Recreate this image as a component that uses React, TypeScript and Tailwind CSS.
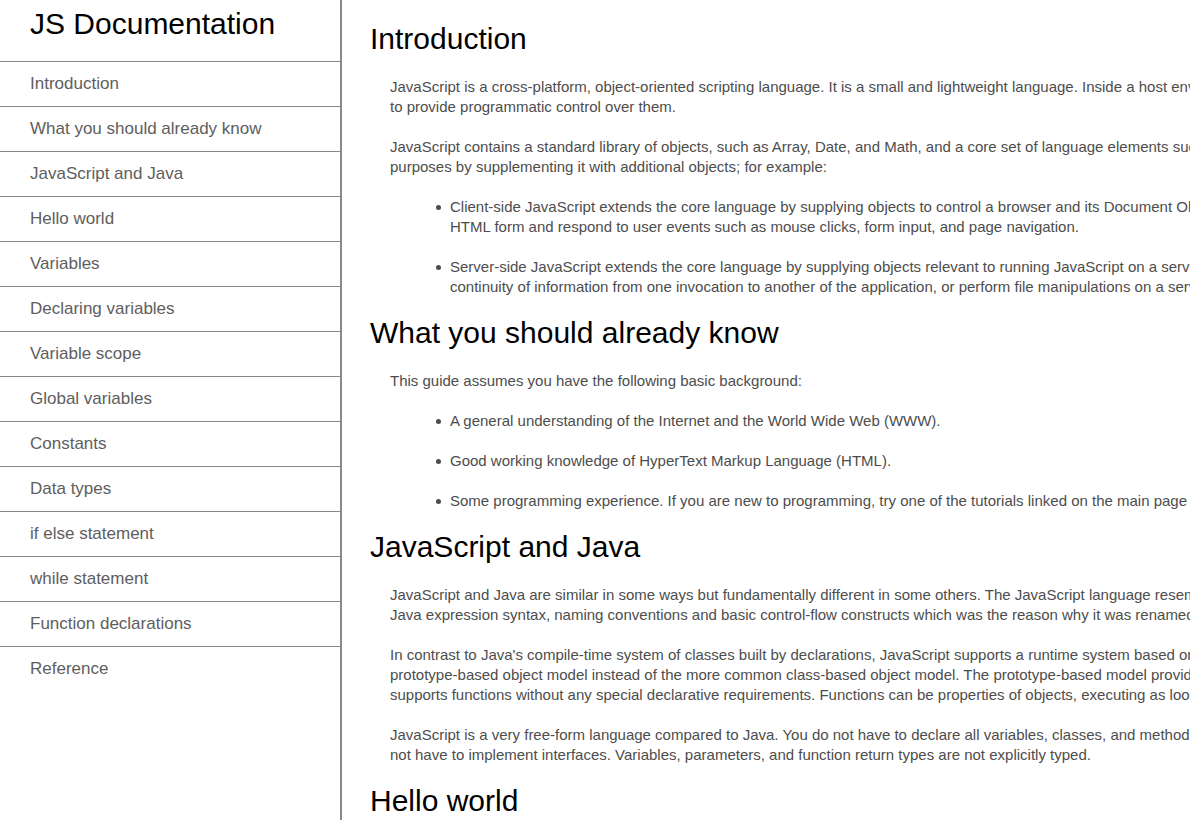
import React from 'react';

const navItems = [
  'Introduction',
  'What you should already know',
  'JavaScript and Java',
  'Hello world',
  'Variables',
  'Declaring variables',
  'Variable scope',
  'Global variables',
  'Constants',
  'Data types',
  'if else statement',
  'while statement',
  'Function declarations',
  'Reference',
];

type Block = { type: 'p'; lines: string[] } | { type: 'ul'; items: string[][] };

const sections: { title: string; blocks: Block[] }[] = [
  {
    title: 'Introduction',
    blocks: [
      {
        type: 'p',
        lines: [
          'JavaScript is a cross-platform, object-oriented scripting language. It is a small and lightweight language. Inside a host environment (for example, a web browser), JavaScript can be connected to the objects of its environment',
          'to provide programmatic control over them.',
        ],
      },
      {
        type: 'p',
        lines: [
          'JavaScript contains a standard library of objects, such as Array, Date, and Math, and a core set of language elements such as operators, control structures, and statements. Core JavaScript can be extended for a variety of',
          'purposes by supplementing it with additional objects; for example:',
        ],
      },
      {
        type: 'ul',
        items: [
          [
            'Client-side JavaScript extends the core language by supplying objects to control a browser and its Document Object Model (DOM). For example, client-side extensions allow an application to place elements on an',
            'HTML form and respond to user events such as mouse clicks, form input, and page navigation.',
          ],
          [
            'Server-side JavaScript extends the core language by supplying objects relevant to running JavaScript on a server. For example, server-side extensions allow an application to communicate with a database, provide',
            'continuity of information from one invocation to another of the application, or perform file manipulations on a server.',
          ],
        ],
      },
    ],
  },
  {
    title: 'What you should already know',
    blocks: [
      { type: 'p', lines: ['This guide assumes you have the following basic background:'] },
      {
        type: 'ul',
        items: [
          ['A general understanding of the Internet and the World Wide Web (WWW).'],
          ['Good working knowledge of HyperText Markup Language (HTML).'],
          ['Some programming experience. If you are new to programming, try one of the tutorials linked on the main page about JavaScript.'],
        ],
      },
    ],
  },
  {
    title: 'JavaScript and Java',
    blocks: [
      {
        type: 'p',
        lines: [
          "JavaScript and Java are similar in some ways but fundamentally different in some others. The JavaScript language resembles Java but does not have Java's static typing and strong type checking. JavaScript follows most",
          'Java expression syntax, naming conventions and basic control-flow constructs which was the reason why it was renamed from LiveScript to JavaScript.',
        ],
      },
      {
        type: 'p',
        lines: [
          "In contrast to Java's compile-time system of classes built by declarations, JavaScript supports a runtime system based on a small number of data types representing numeric, Boolean, and string values. JavaScript has a",
          'prototype-based object model instead of the more common class-based object model. The prototype-based model provides dynamic inheritance; that is, what is inherited can vary for individual objects. JavaScript also',
          'supports functions without any special declarative requirements. Functions can be properties of objects, executing as loosely typed methods.',
        ],
      },
      {
        type: 'p',
        lines: [
          'JavaScript is a very free-form language compared to Java. You do not have to declare all variables, classes, and methods. You do not have to be concerned with whether methods are public, private, or protected, and you do',
          'not have to implement interfaces. Variables, parameters, and function return types are not explicitly typed.',
        ],
      },
    ],
  },
  {
    title: 'Hello world',
    blocks: [
      {
        type: 'p',
        lines: ['To get started with writing JavaScript, open the Scratchpad and write your first "Hello world" JavaScript code:'],
      },
    ],
  },
];

const Lines = ({ lines }: { lines: string[] }) => (
  <>
    {lines.map((l, i) => (
      <span key={i} className="block whitespace-nowrap">
        {l}
      </span>
    ))}
  </>
);

export default function App() {
  return (
    <div className="flex h-screen w-full overflow-hidden bg-white font-['Liberation_Sans',Arial,sans-serif]">
      <nav className="h-full w-[342px] shrink-0 border-r-2 border-[#888]">
        <header className="h-[61px] px-[30px] pt-[7px] text-[30px] leading-[34px] text-black">
          JS Documentation
        </header>
        <ul>
          {navItems.map((item) => (
            <li key={item} className="flex h-[45px] items-center border-t border-[#888] px-[30px] text-[17px] text-[#5e5e5e]">
              {item}
            </li>
          ))}
        </ul>
      </nav>
      <main className="min-w-0 flex-1 overflow-hidden px-[28px] pt-[22px] text-[15px] leading-[20px] text-[#4d4d4d]">
        {sections.map((s) => (
          <section key={s.title} className="mb-[19px]">
            <header className="mb-[21px] text-[30px] leading-[34px] text-black">{s.title}</header>
            <div className="flex flex-col gap-5 pl-5">
              {s.blocks.map((b, i) =>
                b.type === 'p' ? (
                  <p key={i}>
                    <Lines lines={b.lines} />
                  </p>
                ) : (
                  <ul key={i} className="flex flex-col gap-5 pl-[60px]">
                    {b.items.map((it, j) => (
                      <li key={j} className="relative">
                        <span className="absolute left-[-14px] top-[8px] h-[5px] w-[5px] rounded-full bg-[#4d4d4d]" />
                        <Lines lines={it} />
                      </li>
                    ))}
                  </ul>
                )
              )}
            </div>
          </section>
        ))}
      </main>
    </div>
  );
}
